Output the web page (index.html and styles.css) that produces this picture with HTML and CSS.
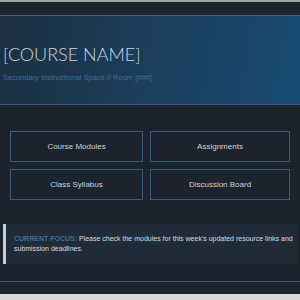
FILE: index.html
```html
<!DOCTYPE html>
<html lang="en">
<head>
    <meta charset="UTF-8">
    <meta name="viewport" content="width=device-width, initial-scale=1.0">
    <title>[COURSE NAME]</title>
    <link rel="stylesheet" href="styles.css">
</head>
<body>
    <div class="window">
        <div class="topbar"></div>

        <header class="hero">
            <h1>[COURSE NAME]</h1>
            <p class="subtitle">Secondary Instructional Space // Room [###]</p>
        </header>

        <main class="content">
            <nav class="links">
                <a class="link-card" href="#">Course Modules</a>
                <a class="link-card" href="#">Assignments</a>
                <a class="link-card" href="#">Class Syllabus</a>
                <a class="link-card" href="#">Discussion Board</a>
            </nav>

            <div class="notice">
                <span class="notice-label">CURRENT FOCUS:</span> Please check the modules for this week's updated resource links and submission deadlines.
            </div>
        </main>

        <footer class="footer"></footer>
    </div>
</body>
</html>
```

FILE: styles.css
```css
/* General Styles */
body {
    margin: 0;
    padding: 0;
    background: #1b242c;
    font-family: "Liberation Sans", Arial, sans-serif;
    overflow: hidden;
}

.window {
    height: 300px;
    border-top: 2px solid #a3a7aa;
    box-sizing: border-box;
    display: flex;
    flex-direction: column;
}

.topbar {
    height: 13px;
    background: #1b242c;
}

/* Header */
.hero {
    height: 90px;
    box-sizing: border-box;
    padding: 27px 0 0 3px;
    border-top: 1px solid #42627f;
    border-bottom: 1px solid #3a5a78;
    background: linear-gradient(100deg, #1c2f40 0%, #1b3d5a 45%, #1a4b72 100%);
}

.hero h1 {
    margin: 0;
    font-family: Lato, "Open Sans", sans-serif;
    font-weight: 300;
    font-size: 18px;
    line-height: 22px;
    color: #c9d5e1;
}

.subtitle {
    margin: 8px 0 0;
    font-size: 7.5px;
    color: #3c6e9b;
}

/* Link grid */
.content {
    flex: 1;
    padding: 26px 10px 0;
}

.links {
    display: grid;
    grid-template-columns: 133px 140px;
    grid-auto-rows: 31px;
    gap: 7px;
}

.link-card {
    display: flex;
    align-items: center;
    justify-content: center;
    border: 1px solid #3d5a74;
    color: #ccd4dc;
    font-size: 8px;
    text-decoration: none;
}

/* Notice */
.notice {
    margin: 24px -7px 0 -7px;
    padding: 10px 4px 10px 8px;
    border-left: 3px solid #c3cfdb;
    background: #1f2c38;
    color: #d6dde4;
    font-size: 7px;
    line-height: 10px;
}

.notice-label {
    color: #3b6f9c;
    font-weight: bold;
}

.footer {
    height: 12px;
    border-top: 1px solid #3b5670;
    border-bottom: 6px solid #d6d7d8;
}
```
